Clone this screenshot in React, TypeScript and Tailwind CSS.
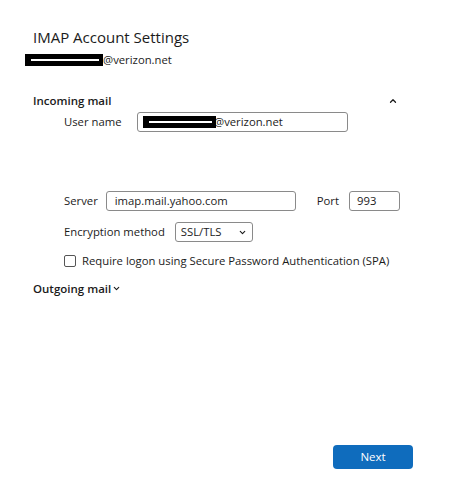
import { ChevronDown, ChevronUp } from 'lucide-react';

function Redacted({ width }: { width: number }) {
  return (
    <span
      className="relative inline-block h-[12px] bg-black align-middle"
      style={{ width }}
    >
      <span className="absolute left-[6px] right-[4px] top-[5px] h-[2px] bg-white" />
    </span>
  );
}

export default function App() {
  return (
    <div
      className="w-[453px] h-[493px] bg-white text-[#1b1b1b] flex flex-col whitespace-nowrap"
      style={{ fontFamily: '"Open Sans", "Noto Sans", sans-serif' }}
    >
      <div className="pl-[33px] pt-[27px] text-[15px] leading-[20px]">IMAP Account Settings</div>
      <div className="pl-[25px] mt-[6px] flex items-center text-[11.3px] leading-[14px]">
        <Redacted width={78} />
        <span>@verizon.net</span>
      </div>

      <div className="pl-[33px] pr-[55px] mt-[26px] flex items-center justify-between">
        <span className="text-[11.5px] font-semibold leading-[16px]">Incoming mail</span>
        <ChevronUp size={10} strokeWidth={3} />
      </div>

      <div className="pl-[64px] mt-[3px] flex items-center text-[11.3px]">
        <span className="w-[73px]">User name</span>
        <div className="w-[211px] h-[20px] border border-[#8a8a8a] rounded-[3px] flex items-center pl-[5px]">
          <Redacted width={73} />
          <span className="-ml-[2px]">@verizon.net</span>
        </div>
      </div>

      <div className="pl-[64px] mt-[59px] flex items-center text-[11.3px]">
        <span>Server</span>
        <div className="ml-[8px] w-[190px] h-[20px] border border-[#8a8a8a] rounded-[3px] flex items-center pl-[8px]">
          imap.mail.yahoo.com
        </div>
        <span className="ml-[21px]">Port</span>
        <div className="ml-[10px] w-[51px] h-[20px] border border-[#8a8a8a] rounded-[3px] flex items-center pl-[7px]">
          993
        </div>
      </div>

      <div className="pl-[64px] mt-[11px] flex items-center text-[11.3px]">
        <span>Encryption method</span>
        <div className="ml-[10px] w-[78px] h-[20px] border border-[#8a8a8a] rounded-[3px] flex items-center justify-between pl-[5px] pr-[5px]">
          <span>SSL/TLS</span>
          <ChevronDown size={9} strokeWidth={3} />
        </div>
      </div>

      <div className="pl-[64px] mt-[11px] flex items-center text-[11.3px]">
        <span className="w-[12px] h-[12px] border border-[#555] rounded-[2px]" />
        <span className="ml-[6px]">Require logon using Secure Password Authentication (SPA)</span>
      </div>

      <div className="pl-[33px] mt-[11px] flex items-center">
        <span className="text-[11.5px] font-semibold leading-[16px]">Outgoing mail</span>
        <ChevronDown size={9} strokeWidth={3} className="ml-[1px]" />
      </div>

      <div className="mt-auto mb-[24px] pr-[40px] flex justify-end">
        <button className="w-[80px] h-[24px] rounded-[4px] bg-[#0f6cbd] text-white text-[11.5px]">
          Next
        </button>
      </div>
    </div>
  );
}
